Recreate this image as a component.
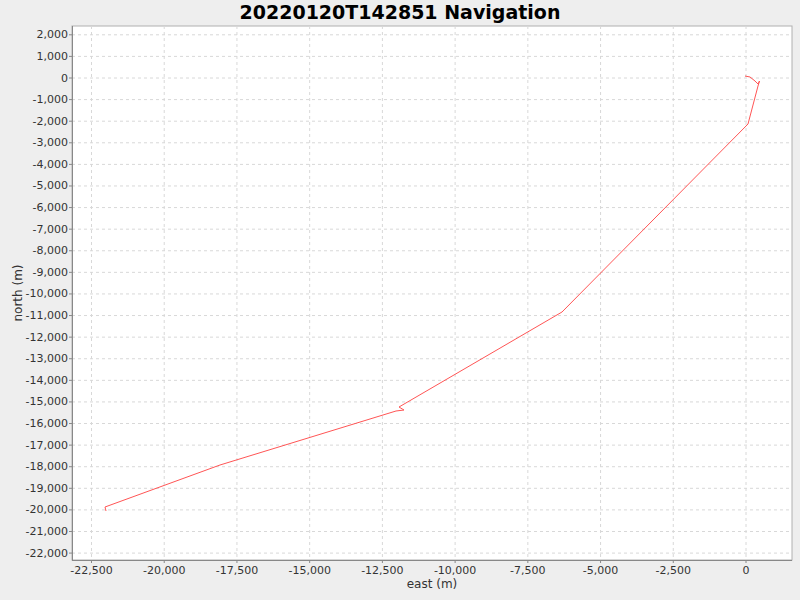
const L = 72, T = 26, R = 792, B = 560;
const xOf = (v: number) => 746 + v * 0.029089;
const yOf = (v: number) => 78 - v * 0.021595;
const fmt = (v: number) => v.toLocaleString("en-US");
const xTicks = Array.from({ length: 10 }, (_, i) => -22500 + i * 2500);
const yTicks = Array.from({ length: 25 }, (_, i) => 2000 - i * 1000);
const path: [number, number][] = [
  [745, 76], [750, 77], [755, 81], [758, 84], [759.5, 81], [758, 86], [748, 124],
  [562, 312], [399, 407], [404, 410], [396, 411], [220, 465], [105, 507], [106, 511],
];

export default function App() {
  return (
    <div className="relative w-[800px] h-[600px] bg-[#eeeeee] overflow-hidden" style={{ fontFamily: '"DejaVu Sans", sans-serif' }}>
      <div className="absolute left-0 right-0 top-0 text-center text-[19px] font-bold leading-[24px] text-black">20220120T142851 Navigation</div>
      <svg className="absolute left-0 top-0" width={800} height={600}>
        <rect x={L} y={T} width={R - L} height={B - T} fill="#fff" stroke="#b0b0b0" />
        {xTicks.map((v) => (
          <line key={v} x1={xOf(v)} x2={xOf(v)} y1={T} y2={B} stroke="#d8d8d8" strokeDasharray="3 3" />
        ))}
        {yTicks.map((v) => (
          <line key={v} x1={L} x2={R} y1={yOf(v)} y2={yOf(v)} stroke="#d8d8d8" strokeDasharray="3 3" />
        ))}
        <line x1={L + 0.5} x2={L + 0.5} y1={T} y2={B} stroke="#888" />
        <line x1={L} x2={R} y1={B + 0.5} y2={B + 0.5} stroke="#888" />
        {xTicks.map((v) => (
          <line key={v} x1={xOf(v)} x2={xOf(v)} y1={B} y2={B + 3} stroke="#888" />
        ))}
        {yTicks.map((v) => (
          <line key={v} x1={L - 3} x2={L} y1={yOf(v)} y2={yOf(v)} stroke="#888" />
        ))}
        <polyline points={path.map((p) => p.join(",")).join(" ")} fill="none" stroke="#ff5555" strokeWidth={1} />
      </svg>
      {yTicks.map((v) => (
        <div key={v} className="absolute right-[732px] text-[11px] leading-[13px] text-[#333]" style={{ top: yOf(v) - 6.5 }}>
          {fmt(v)}
        </div>
      ))}
      {xTicks.map((v) => (
        <div key={v} className="absolute top-[564px] w-[80px] -ml-[40px] text-center text-[11px] leading-[13px] text-[#333]" style={{ left: xOf(v) }}>
          {fmt(v)}
        </div>
      ))}
      <div className="absolute left-[72px] right-[8px] top-[577px] text-center text-[12px] leading-[15px] text-[#333]">east (m)</div>
      <div className="absolute left-[18px] top-[293px] -translate-x-1/2 -translate-y-1/2 -rotate-90 whitespace-nowrap text-[12px] leading-[15px] text-[#333]">north (m)</div>
    </div>
  );
}
